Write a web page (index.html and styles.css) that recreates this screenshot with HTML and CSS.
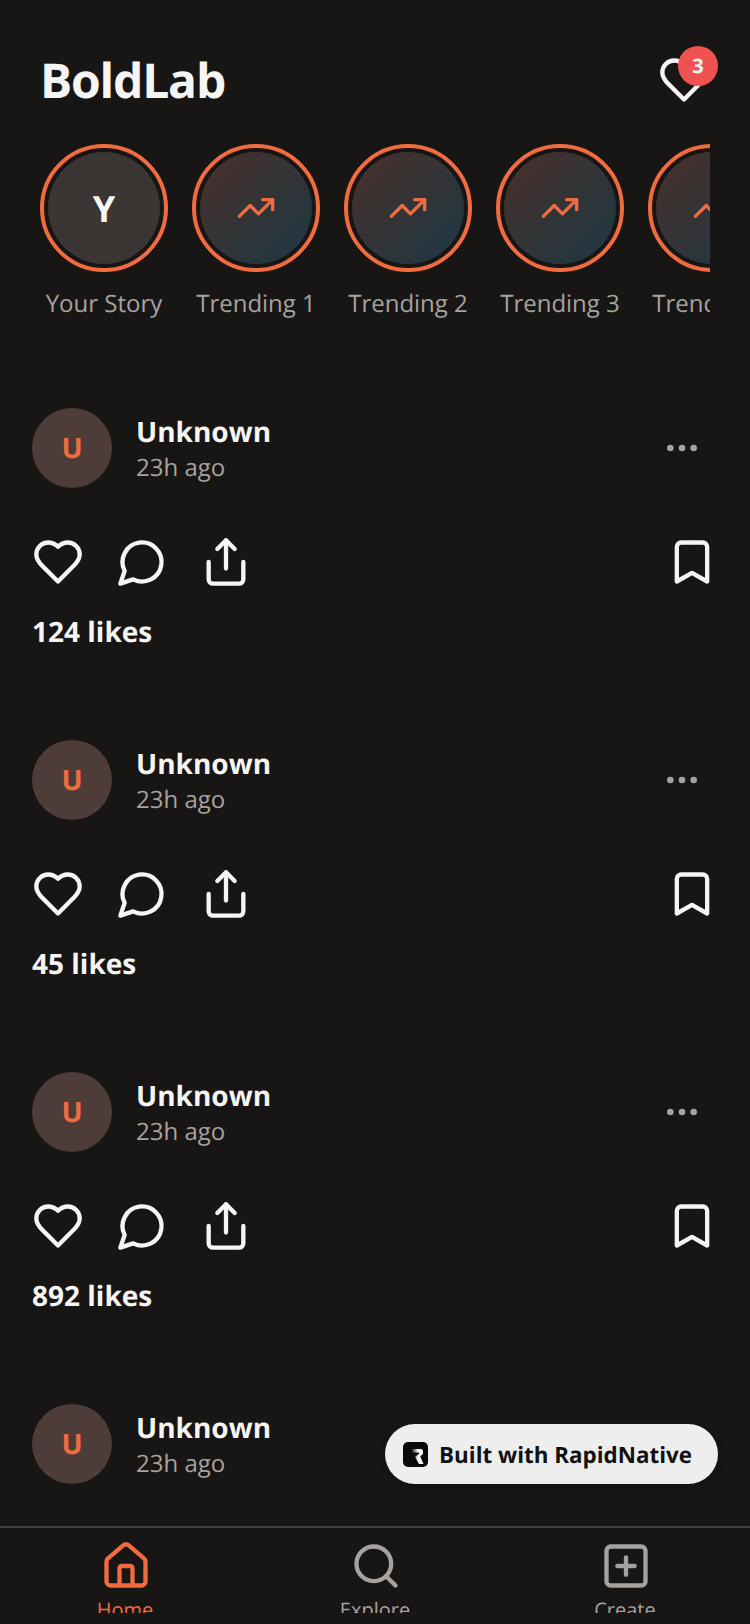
FILE: index.html
```html
<!DOCTYPE html>
<html lang="en">
<head>
  <meta charset="UTF-8" />
  <meta name="viewport" content="width=device-width, initial-scale=1.0"/>
  <title>BoldLab</title>
  <link rel="stylesheet" href="styles.css">
</head>
<body>

  <!-- Icon sprite -->
  <svg class="sprite" aria-hidden="true">
    <defs>
      <linearGradient id="r-fade" x1="0" y1="0" x2="1" y2="0">
        <stop offset="0" stop-color="#1c1c1c"/>
        <stop offset="0.5" stop-color="#f5f5f5"/>
      </linearGradient>
    </defs>
    <symbol id="i-heart" viewBox="0 0 24 24"><path d="M19 14c1.49-1.46 3-3.21 3-5.5A5.5 5.5 0 0 0 16.5 3c-1.76 0-3 .5-4.5 2-1.5-1.5-2.74-2-4.5-2A5.5 5.5 0 0 0 2 8.5c0 2.3 1.5 4.05 3 5.5l7 7Z"/></symbol>
    <symbol id="i-comment" viewBox="0 0 24 24"><path d="M7.9 20A9 9 0 1 0 4 16.1L2 22Z"/></symbol>
    <symbol id="i-share" viewBox="0 0 24 24"><path d="M4 12v8a2 2 0 0 0 2 2h12a2 2 0 0 0 2-2v-8"/><polyline points="16 6 12 2 8 6"/><line x1="12" y1="2" x2="12" y2="15"/></symbol>
    <symbol id="i-bookmark" viewBox="0 0 24 24"><path d="m19 21-7-4-7 4V5a2 2 0 0 1 2-2h10a2 2 0 0 1 2 2v16z"/></symbol>
    <symbol id="i-more" viewBox="0 0 24 24"><circle cx="12" cy="12" r="1"/><circle cx="19" cy="12" r="1"/><circle cx="5" cy="12" r="1"/></symbol>
    <symbol id="i-trend" viewBox="0 0 24 24"><polyline points="22 7 13.5 15.5 8.5 10.5 2 17"/><polyline points="16 7 22 7 22 13"/></symbol>
    <symbol id="i-home" viewBox="0 0 24 24"><path d="M15 21v-8a1 1 0 0 0-1-1h-4a1 1 0 0 0-1 1v8"/><path d="M3 10a2 2 0 0 1 .709-1.528l7-5.999a2 2 0 0 1 2.582 0l7 5.999A2 2 0 0 1 21 10v9a2 2 0 0 1-2 2H5a2 2 0 0 1-2-2z"/></symbol>
    <symbol id="i-search" viewBox="0 0 24 24"><circle cx="11" cy="11" r="8"/><path d="m21 21-4.3-4.3"/></symbol>
    <symbol id="i-plus" viewBox="0 0 24 24"><rect x="3" y="3" width="18" height="18" rx="2"/><path d="M8 12h8"/><path d="M12 8v8"/></symbol>
  </svg>

  <div class="app">
    <main class="main">
      <header class="top-bar">
        <h1 class="logo">BoldLab</h1>
        <div class="notify">
          <svg class="icon icon-lg"><use href="#i-heart"/></svg>
          <span class="notify-badge">3</span>
        </div>
      </header>

      <div class="stories">
        <div class="story">
          <div class="story-ring"><div class="story-inner story-own">Y</div></div>
          <p class="story-label">Your Story</p>
        </div>
        <div class="story">
          <div class="story-ring"><div class="story-inner"><svg class="icon icon-trend"><use href="#i-trend"/></svg></div></div>
          <p class="story-label">Trending 1</p>
        </div>
        <div class="story">
          <div class="story-ring"><div class="story-inner"><svg class="icon icon-trend"><use href="#i-trend"/></svg></div></div>
          <p class="story-label">Trending 2</p>
        </div>
        <div class="story">
          <div class="story-ring"><div class="story-inner"><svg class="icon icon-trend"><use href="#i-trend"/></svg></div></div>
          <p class="story-label">Trending 3</p>
        </div>
        <div class="story">
          <div class="story-ring"><div class="story-inner"><svg class="icon icon-trend"><use href="#i-trend"/></svg></div></div>
          <p class="story-label">Trending 4</p>
        </div>
      </div>

      <article class="post">
        <div class="post-head">
          <div class="avatar">U</div>
          <div class="post-meta">
            <div class="post-author">Unknown</div>
            <div class="post-time">23h ago</div>
          </div>
          <svg class="icon icon-more"><use href="#i-more"/></svg>
        </div>
        <div class="post-actions">
          <svg class="icon icon-lg"><use href="#i-heart"/></svg>
          <svg class="icon icon-lg"><use href="#i-comment"/></svg>
          <svg class="icon icon-lg"><use href="#i-share"/></svg>
          <svg class="icon icon-lg icon-save"><use href="#i-bookmark"/></svg>
        </div>
        <p class="post-likes">124 likes</p>
      </article>

      <article class="post">
        <div class="post-head">
          <div class="avatar">U</div>
          <div class="post-meta">
            <div class="post-author">Unknown</div>
            <div class="post-time">23h ago</div>
          </div>
          <svg class="icon icon-more"><use href="#i-more"/></svg>
        </div>
        <div class="post-actions">
          <svg class="icon icon-lg"><use href="#i-heart"/></svg>
          <svg class="icon icon-lg"><use href="#i-comment"/></svg>
          <svg class="icon icon-lg"><use href="#i-share"/></svg>
          <svg class="icon icon-lg icon-save"><use href="#i-bookmark"/></svg>
        </div>
        <p class="post-likes">45 likes</p>
      </article>

      <article class="post">
        <div class="post-head">
          <div class="avatar">U</div>
          <div class="post-meta">
            <div class="post-author">Unknown</div>
            <div class="post-time">23h ago</div>
          </div>
          <svg class="icon icon-more"><use href="#i-more"/></svg>
        </div>
        <div class="post-actions">
          <svg class="icon icon-lg"><use href="#i-heart"/></svg>
          <svg class="icon icon-lg"><use href="#i-comment"/></svg>
          <svg class="icon icon-lg"><use href="#i-share"/></svg>
          <svg class="icon icon-lg icon-save"><use href="#i-bookmark"/></svg>
        </div>
        <p class="post-likes">892 likes</p>
      </article>

      <article class="post">
        <div class="post-head">
          <div class="avatar">U</div>
          <div class="post-meta">
            <div class="post-author">Unknown</div>
            <div class="post-time">23h ago</div>
          </div>
          <svg class="icon icon-more"><use href="#i-more"/></svg>
        </div>
      </article>
    </main>

    <nav class="tab-bar">
      <div class="tab tab-active">
        <svg class="icon icon-lg"><use href="#i-home"/></svg>
        <span class="tab-label">Home</span>
      </div>
      <div class="tab">
        <svg class="icon icon-lg"><use href="#i-search"/></svg>
        <span class="tab-label">Explore</span>
      </div>
      <div class="tab">
        <svg class="icon icon-lg"><use href="#i-plus"/></svg>
        <span class="tab-label">Create</span>
      </div>
    </nav>

    <div class="built-with">
      <svg class="built-logo" viewBox="0 0 25 25">
        <rect width="25" height="25" rx="5" fill="#0a0a0a"/>
        <path d="M9 7h8.500A2.500 2.500 0 0 1 20 9.500V12l-2.800 2.200L20.500 22H16l-4-7.200 4-2.800v-1.500H9z" fill="url(#r-fade)"/>
      </svg>
      <span>Built with RapidNative</span>
    </div>
  </div>

</body>
</html>
```

FILE: styles.css
```css
* {
  margin: 0;
  padding: 0;
  box-sizing: border-box;
  font-family: 'Open Sans', 'Noto Sans', sans-serif;
}

body {
  background-color: #171615;
  color: #f5f5f4;
  text-rendering: geometricPrecision;
}

.sprite {
  position: absolute;
  width: 0;
  height: 0;
}

.app {
  position: relative;
  display: flex;
  flex-direction: column;
  height: 1624px;
  padding-bottom: 11px;
  overflow: hidden;
}

.main {
  flex: 1;
  overflow: hidden;
}

.icon {
  fill: none;
  stroke: #f5f5f4;
  stroke-width: 2;
  stroke-linecap: round;
  stroke-linejoin: round;
  flex-shrink: 0;
}

.icon-lg {
  width: 52px;
  height: 52px;
}

/* top bar */
.top-bar {
  display: flex;
  justify-content: space-between;
  align-items: center;
  padding: 48px 40px 31px;
}

.logo {
  font-size: 48px;
  font-weight: 700;
  line-height: 65px;
  letter-spacing: -1.2px;
}

.notify {
  position: relative;
  width: 52px;
  height: 52px;
  margin-bottom: 2px;
}

.notify-badge {
  position: absolute;
  top: -8px;
  right: -8px;
  width: 40px;
  height: 40px;
  display: flex;
  align-items: center;
  justify-content: center;
  border-radius: 50%;
  background-color: #ef5350;
  font-size: 20px;
  font-weight: 700;
}

/* stories */
.stories {
  display: flex;
  gap: 24px;
  margin: 0 40px 87px;
  overflow: hidden;
}

.story {
  width: 128px;
  flex-shrink: 0;
}

.story-ring {
  width: 128px;
  height: 128px;
  padding: 4px;
  border: 4px solid #f06c3e;
  border-radius: 50%;
}

.story-inner {
  width: 100%;
  height: 100%;
  display: flex;
  align-items: center;
  justify-content: center;
  border-radius: 50%;
  background: linear-gradient(135deg, #4a302a, #1c3844);
}

.story-own {
  background: #3b3634;
  font-size: 36px;
  font-weight: 700;
}

.icon-trend {
  width: 40px;
  height: 40px;
  stroke: #f06c3e;
}

.story-label {
  margin-top: 15px;
  margin-bottom: 1px;
  font-size: 24px;
  line-height: 33px;
  color: #a8a29e;
  text-align: center;
  white-space: nowrap;
}

/* posts */
.post {
  padding: 0 32px;
  margin-bottom: 89px;
}

.post-head {
  display: flex;
  align-items: center;
  gap: 24px;
  padding-right: 16px;
}

.avatar {
  width: 80px;
  height: 80px;
  display: flex;
  align-items: center;
  justify-content: center;
  border-radius: 50%;
  background-color: #4d3c37;
  color: #f06c3e;
  font-size: 28px;
  font-weight: 700;
}

.post-meta {
  flex: 1;
}

.post-author {
  font-size: 28px;
  font-weight: 700;
  line-height: 38px;
}

.post-time {
  font-size: 24px;
  line-height: 33px;
  color: #a8a29e;
}

.icon-more {
  width: 40px;
  height: 40px;
  stroke: #a8a29e;
}

.post-actions {
  display: flex;
  gap: 32px;
  margin-top: 48px;
}

.icon-save {
  margin-left: auto;
}

.post-likes {
  margin-top: 25px;
  font-size: 28px;
  font-weight: 700;
  line-height: 38px;
}

/* bottom tabs */
.tab-bar {
  display: flex;
  height: 87px;
  padding-top: 12px;
  border-top: 2px solid #44403c;
  overflow: hidden;
}

.tab {
  flex: 1;
  display: flex;
  flex-direction: column;
  align-items: center;
}

.tab .icon {
  margin-left: 2px;
  stroke: #a8a29e;
}

.tab-label {
  margin-top: 4px;
  font-size: 20px;
  line-height: 27px;
  color: #a8a29e;
}

.tab-active .icon {
  stroke: #f06c3e;
}

.tab-active .tab-label {
  color: #f06c3e;
}

/* floating pill */
.built-with {
  position: absolute;
  right: 32px;
  bottom: 140px;
  display: flex;
  align-items: center;
  gap: 11px;
  height: 60px;
  padding: 0 26px 0 18px;
  border-radius: 30px;
  background-color: #eeeeee;
  box-shadow: 0 2px 8px rgba(0, 0, 0, 0.15);
  color: #111111;
  font-size: 22.4px;
  font-weight: 700;
  white-space: nowrap;
}

.built-logo {
  width: 25px;
  height: 25px;
}
```
